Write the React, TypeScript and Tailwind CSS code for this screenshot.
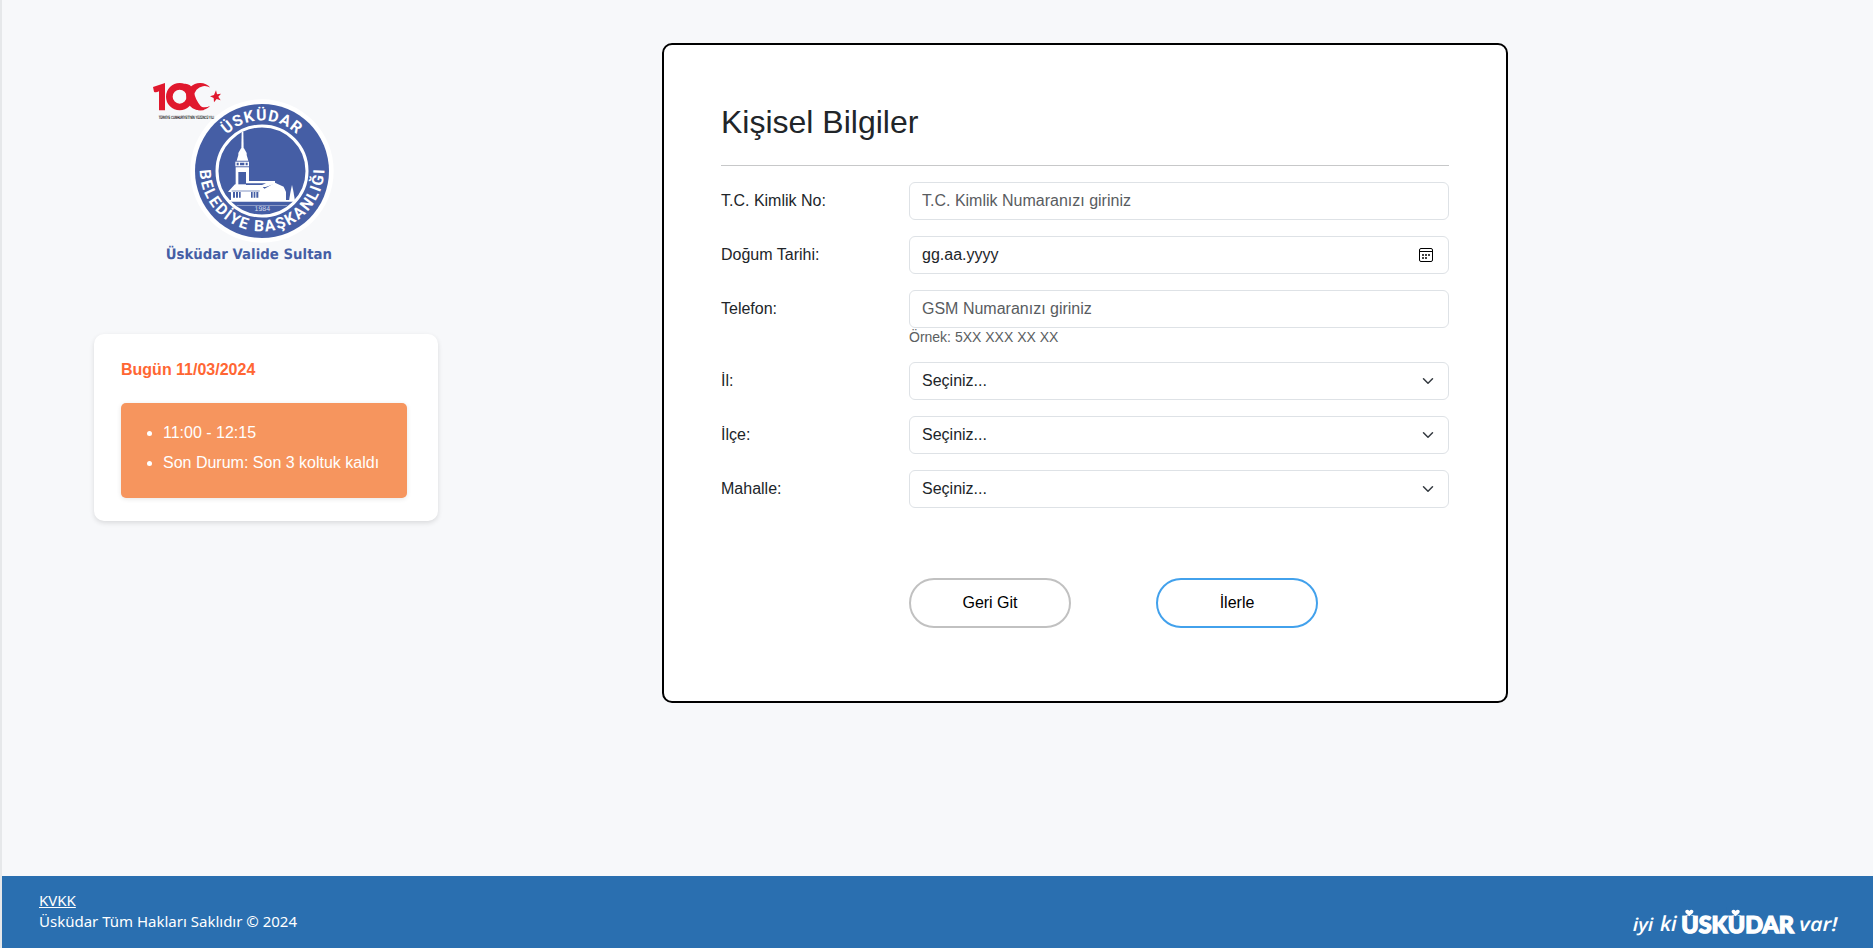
import React, { useState } from "react";

const field =
  "h-[38px] w-[540px] rounded-md border border-[#dee2e6] bg-white px-3 text-base leading-6 text-[#212529]";

function Emblem() {
  return (
    <svg
      className="block h-[210px] w-[230px]"
      viewBox="0 0 690 630"
      role="img"
      aria-label="Üsküdar Belediye Başkanlığı"
      textRendering="geometricPrecision"
    >
      <defs>
        <path id="arcTop" d="M 244 318 A 152 152 0 0 1 548 318" />
        <path id="arcBottom" d="M 209 312 A 187 187 0 0 0 583 312" />
      </defs>

      <circle cx="396" cy="318" r="215" fill="#fff" />
      <circle cx="396" cy="318" r="201" fill="#455ea5" />
      <circle cx="396" cy="318" r="135" fill="none" stroke="#fff" strokeWidth="9" />

      <g fill="#fff" fontFamily="Roboto, sans-serif" fontWeight="700" fontSize="47">
        <text>
          <textPath href="#arcTop" startOffset="121" textLength="233" lengthAdjust="spacing">
            ÜSKÜDAR
          </textPath>
        </text>
        <text>
          <textPath href="#arcBottom" startOffset="3" textLength="582" lengthAdjust="spacing">
            BELEDİYE BAŞKANLIĞI
          </textPath>
        </text>
      </g>

      <g fill="#fff">
        <path d="M335 200h5l1 54h-7z" />
        <path d="M333 250h9l8 14v6l5 17h-35l5-17v-6z" />
        <path d="M316 290h41v14h-41z" />
        <path d="M317 307h40v41h78v8l-28 10h-90z" />
        <path d="M294 380l21-22h75l20 20v29H303V382z" />
        <path d="M397 375l38-22 26 12 7 16v26h-71z" />
        <path d="M477 407l5-29 4-18 4 18 5 29z" />
        <path d="M299 405h199v5H299z" />
        <path d="M320 421h152v2H320z" opacity=".5" />
      </g>
      <g fill="#455ea5">
        <path d="M325 321h23v37h-23z" />
        <path d="M348 355h60l-12 5h-48z" />
        <path d="M309 381h6v17h-6zM318 381h6v17h-6zM327 381h5v17h-5zM363 381h5v17h-5zM371 381h5v17h-5zM379 381h6v17h-6z" />
        <path d="M305 377h84v2h-84z" />
        <path d="M320 293h6v8h-6zM330 293h13v8h-13zM347 293h6v8h-6z" />
      </g>
      <text x="397" y="439" textAnchor="middle" fill="#d5dcee" fontFamily="Liberation Sans, sans-serif" fontSize="21">
        1984
      </text>

      <g fill="#e0182d">
        <path d="M69 66l36-12v82H87V79q-10 5-15 1z" />
        <circle cx="149" cy="95" r="31" fill="none" stroke="#e0182d" strokeWidth="20" />
        <path d="M240.500 67.600A41 41 0 1 0 240.500 122.400A32 32 0 1 1 240.500 67.600z" />
        <path d="M258 76l3 12 12-2-8 9 7 11-12-4-8 10-1-13-11-5 12-4z" />
        <path d="M160 57q10-3 20 4 8 8 13 27 8 27 30 47-22 4-38-10-12-12-15-32-4-24-10-36z" />
      </g>
      <text
        x="86"
        y="161"
        textLength="166"
        lengthAdjust="spacingAndGlyphs"
        fill="#111"
        fontFamily="Liberation Sans, sans-serif"
        fontWeight="700"
        fontSize="14"
      >
        TÜRKİYE CUMHURİYETİ'NİN YÜZÜNCÜ YILI
      </text>

      <text
        x="107"
        y="582"
        textLength="499"
        lengthAdjust="spacingAndGlyphs"
        fill="#455ea5"
        fontFamily="DejaVu Sans, sans-serif"
        fontWeight="700"
        fontSize="43"
      >
        Üsküdar Valide Sultan
      </text>
    </svg>
  );
}

function Slogan() {
  return (
    <svg
      className="block h-[34px] w-[210px]"
      viewBox="0 0 630 102"
      role="img"
      aria-label="iyi ki Üsküdar var!"
      textRendering="geometricPrecision"
    >
      <g fill="#fff">
        <g fontFamily="Open Sans, sans-serif" fontStyle="italic" fontWeight="600" fontSize="54">
          <text x="8" y="71" textLength="62" lengthAdjust="spacingAndGlyphs">
            iyi
          </text>
          <text x="90" y="71" fontSize="62" textLength="50" lengthAdjust="spacingAndGlyphs">
            ki
          </text>
          <text x="508" y="72" fontSize="58" textLength="114" lengthAdjust="spacingAndGlyphs">
            var!
          </text>
        </g>
        <text
          x="154"
          y="78"
          textLength="338"
          lengthAdjust="spacingAndGlyphs"
          fontFamily="Lato, sans-serif"
          fontWeight="900"
          fontSize="70"
          stroke="#fff"
          strokeWidth="4"
        >
          ÜSKÜDAR
        </text>
        <path d="M150 0h60v25h-60zM290 0h60v25h-60z" fill="#2a6fb0" />
        <path d="M178 28l-10-9q-5-7 1-10 5-2 9 3 4-5 9-3 6 3 1 10z" />
        <path d="M317 28l-10-9q-5-7 1-10 5-2 9 3 4-5 9-3 6 3 1 10z" />
      </g>
    </svg>
  );
}

function Row({ label, children }: { label: string; children: React.ReactNode }) {
  return (
    <div className="mb-4 flex items-start">
      <label className="w-[188px] pt-[7px] text-base leading-6 text-[#212529]">{label}</label>
      <div>{children}</div>
    </div>
  );
}

function SelectField() {
  return (
    <button type="button" className={`${field} flex items-center justify-between text-left`}>
      <span>Seçiniz...</span>
      <svg className="h-3 w-4" viewBox="0 0 16 16" fill="none" stroke="#343a40" strokeWidth="2" strokeLinecap="round" strokeLinejoin="round">
        <path d="m2 5 6 6 6-6" />
      </svg>
    </button>
  );
}

function DateField() {
  return (
    <div className={`${field} flex items-center justify-between`}>
      <span>gg.aa.yyyy</span>
      <svg className="mr-[3px] h-3.5 w-3.5" viewBox="0 0 14 14" fill="none">
        <rect x=".5" y=".5" width="13" height="13" rx="1.5" stroke="#000" />
        <path d="M1 3.5h12" stroke="#000" />
        <path d="M3 6h2v2H3zM6 6h2v2H6zM9 6h2v2H9zM3 9h2v2H3zM6 9h2v2H6z" fill="#444" />
      </svg>
    </div>
  );
}

export default function App() {
  const [id, setId] = useState("");
  const [phone, setPhone] = useState("");
  return (
    <div className="flex h-[948px] flex-col border-l-2 border-[#e6e8ea] bg-[#f7f8fa] font-['Liberation_Sans',Arial,sans-serif]">
      <main className="flex min-h-0 flex-1 items-start">
        <aside className="w-[660px] pt-[65px]">
          <div className="ml-32">
            <Emblem />
          </div>
          <section className="mt-[59px] ml-[92px] h-[187px] w-[344px] rounded-[10px] bg-white px-[27px] pt-6 shadow-[0_2px_5px_rgba(0,0,0,0.12)]">
            <h2 className="text-base leading-6 font-bold text-[#ff6633]">Bugün 11/03/2024</h2>
            <ul className="mt-[21px] h-[95px] w-[286px] list-disc rounded-[5px] bg-[#f6955e] pt-[15px] pl-[42px] text-base leading-[30px] text-white shadow-[0_1px_5px_rgba(0,0,0,0.1)]">
              <li>11:00 - 12:15</li>
              <li>Son Durum: Son 3 koltuk kaldı</li>
            </ul>
          </section>
        </aside>

        <section className="mt-[43px] h-[660px] w-[846px] rounded-[10px] border-2 border-black bg-white px-[57px] pt-[58px]">
          <h1 className="text-[32px] leading-[38px] text-[#212529]">Kişisel Bilgiler</h1>
          <hr className="mt-6 mb-4 border-0 border-t border-[#c7c8c9]" />
          <Row label="T.C. Kimlik No:">
            <input
              className={`${field} block placeholder:text-[#595c5f] placeholder:opacity-100`}
              placeholder="T.C. Kimlik Numaranızı giriniz"
              value={id}
              onChange={(e) => setId(e.target.value)}
            />
          </Row>
          <Row label="Doğum Tarihi:">
            <DateField />
          </Row>
          <Row label="Telefon:">
            <input
              className={`${field} block placeholder:text-[#595c5f] placeholder:opacity-100`}
              placeholder="GSM Numaranızı giriniz"
              value={phone}
              onChange={(e) => setPhone(e.target.value)}
            />
            <p className="h-[18px] text-sm leading-[18px] text-[#5b5e61]">Örnek: 5XX XXX XX XX</p>
          </Row>
          <Row label="İl:">
            <SelectField />
          </Row>
          <Row label="İlçe:">
            <SelectField />
          </Row>
          <Row label="Mahalle:">
            <SelectField />
          </Row>
          <div className="mt-[70px] flex gap-[85px] pl-[188px] text-base text-black">
            <button type="button" className="h-[50px] w-[162px] rounded-[25px] border-2 border-[#c1c1c1] bg-white pb-px">
              Geri Git
            </button>
            <button type="button" className="h-[50px] w-[162px] rounded-[25px] border-2 border-[#42a1ec] bg-white pb-px">
              İlerle
            </button>
          </div>
        </section>
      </main>

      <footer className="flex h-[72px] items-start justify-between bg-[#2a6fb0] pl-[37px] text-white">
        <div className="pt-[14px] font-['Noto_Sans','Open_Sans',sans-serif] text-[15px] leading-[21px]">
          <a className="block underline underline-offset-1" href="#kvkk">
            KVKK
          </a>
          <p>Üsküdar Tüm Hakları Saklıdır © 2024</p>
        </div>
        <div className="pt-[31px] pr-[33px]">
          <Slogan />
        </div>
      </footer>
    </div>
  );
}
